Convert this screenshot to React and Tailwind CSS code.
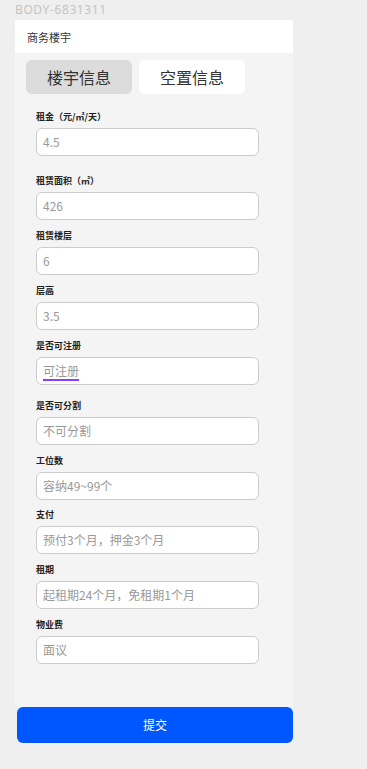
import React from 'react';

const fields = [
    { label: '租金（元/㎡/天）', value: '4.5', mt: 'mt-[17px]' },
    { label: '租赁面积（㎡）', value: '426', mt: 'mt-[19px]' },
    { label: '租赁楼层', value: '6', mt: 'mt-[10px]' },
    { label: '层高', value: '3.5', mt: 'mt-[10px]' },
    { label: '是否可注册', value: '可注册', mt: 'mt-[10px]', composing: true },
    { label: '是否可分割', value: '不可分割', mt: 'mt-[15px]' },
    { label: '工位数', value: '容纳49~99个', mt: 'mt-[10px]' },
    { label: '支付', value: '预付3个月，押金3个月', mt: 'mt-[9px]' },
    { label: '租期', value: '起租期24个月，免租期1个月', mt: 'mt-[10px]' },
    { label: '物业费', value: '面议', mt: 'mt-[10px]' },
];

function App() {
    return (
        <div className="min-h-screen bg-[#efefef] font-['Noto_Sans_CJK_SC','Noto_Sans',sans-serif]">
            {/* 顶部编号 */}
            <div className="h-[20px] pl-[15px] text-[12px] leading-[20px] text-[#c4c4c4] font-normal font-['Noto_Sans','Noto_Sans_CJK_SC',sans-serif] tracking-[0.6px]">
                BODY-6831311
            </div>

            <div className="w-[278px] ml-[15px]">
                {/* 标题栏 */}
                <div className="h-[33px] bg-white flex items-center px-[12px] pt-[1px] text-[11px] text-[#333]">
                    商务楼宇
                </div>

                {/* 表单区域 */}
                <div className="bg-[#f4f4f4] pb-[43px]">
                    <div className="flex gap-[7px] pl-[11px] pt-[7px]">
                        <div className="w-[106px] h-[34px] rounded-md bg-[#dcdcdc] flex items-center justify-center text-[16px] text-[#333]">
                            楼宇信息
                        </div>
                        <div className="w-[106px] h-[34px] rounded-md bg-white flex items-center justify-center text-[16px] text-[#333]">
                            空置信息
                        </div>
                    </div>

                    <div className="pl-[21px]">
                        {fields.map((f) => (
                            <div key={f.label} className={f.mt}>
                                <div className="h-[12px] leading-[12px] text-[9px] font-bold text-[#222] mb-[5px]">
                                    {f.label}
                                </div>
                                <div className="w-[223px] h-[28px] bg-white border border-[#cccccc] rounded-md flex items-center px-[6px] text-[12px] text-[#999]">
                                    {f.composing ? (
                                        <span className="underline decoration-[#8a3ffc] decoration-[1.5px] underline-offset-[3px]">{f.value}</span>
                                    ) : (
                                        f.value
                                    )}
                                </div>
                            </div>
                        ))}
                    </div>
                </div>

                {/* 提交按钮 */}
                <button className="ml-[2px] w-[276px] h-[36px] rounded-md bg-[#0057ff] text-white text-[12px] flex items-center justify-center">
                    提交
                </button>
            </div>
        </div>
    );
}

export default App;
